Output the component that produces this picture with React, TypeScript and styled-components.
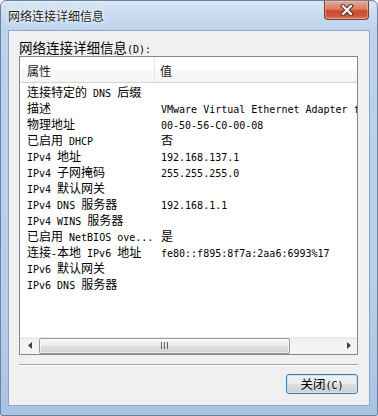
import React from 'react';
import styled, { createGlobalStyle } from 'styled-components';

const CJK = `"Noto Sans CJK SC", "Noto Sans", sans-serif`;
const MONO = `"DejaVu Sans Mono", "Liberation Mono", monospace`;

const GlobalStyle = createGlobalStyle`
  html, body {
    margin: 0;
    padding: 0;
    background: #ffffff;
  }
  body {
    width: 378px;
    height: 416px;
    overflow: hidden;
    font-family: ${CJK};
  }
`;

const Window = styled.div`
  box-sizing: border-box;
  width: 378px;
  height: 416px;
  display: flex;
  flex-direction: column;
  padding: 0 7px 9px 7px;
  border: 1px solid #6f839c;
  border-radius: 6px 6px 2px 2px;
  background: linear-gradient(to bottom, #dbe8f6 0px, #c8dbf0 14px, #bdd3ec 30px, #b6cee9 300px, #a9c4e4 100%);
`;

const TitleBar = styled.div`
  height: 29px;
  margin: 0 -7px;
  padding: 0 8px 0 7px;
  display: flex;
  justify-content: space-between;
  flex-shrink: 0;
`;

const Title = styled.div`
  font-size: 12px;
  line-height: 29px;
  color: #1e1e1e;
  text-shadow: 0 0 6px #ffffff, 0 0 3px #ffffff;
`;

const CloseButton = styled.div`
  width: 45px;
  height: 19px;
  box-sizing: border-box;
  border: 1px solid #7d3a2a;
  border-top: none;
  border-radius: 0 0 4px 4px;
  background: linear-gradient(to bottom, #eaa996 0%, #dd7c62 45%, #c8492b 55%, #cf5a3c 85%, #e08a70 100%);
  box-shadow: inset 0 0 0 1px rgba(255, 200, 180, 0.45);
  display: flex;
  align-items: center;
  justify-content: center;
`;

const Client = styled.div`
  flex: 1;
  display: flex;
  flex-direction: column;
  background: #f0f0f0;
  border: 1px solid #8ea6c4;
  padding: 8px 11px 0 10px;
`;

const GroupLabel = styled.div`
  font-size: 13.5px;
  line-height: 16px;
  height: 16px;
  margin-bottom: 1px;
  color: #000;
  white-space: pre;
`;

const Latin = styled.span`
  font-family: ${MONO};
  font-size: 10px;
`;

const ListBox = styled.div`
  box-sizing: border-box;
  height: 299px;
  border: 1px solid #828790;
  background: #ffffff;
  display: flex;
  flex-direction: column;
`;

const HeaderRow = styled.div`
  box-sizing: border-box;
  height: 26px;
  display: flex;
  background: linear-gradient(to bottom, #ffffff 0%, #ffffff 45%, #f7f8f9 55%, #f3f4f6 100%);
  border-bottom: 1px solid #d5d5d5;
  flex-shrink: 0;
`;

const HeaderCell = styled.div<{ $w?: number }>`
  box-sizing: border-box;
  ${(p) => (p.$w ? `width: ${p.$w}px;` : 'flex: 1;')}
  padding: 4px 0 0 ${(p) => (p.$w ? 7 : 5)}px;
  font-size: 12px;
  line-height: 20px;
  color: #1a1a1a;
  border-right: ${(p) => (p.$w ? '1px solid #e3e5e8' : 'none')};
`;

const Rows = styled.div`
  flex: 1;
  overflow: hidden;
  padding-top: 1px;
`;

const Row = styled.div`
  display: flex;
  height: 16px;
  line-height: 16px;
  font-size: 12px;
  color: #000;
  white-space: pre;
`;

const NameCell = styled.div`
  box-sizing: border-box;
  width: 135px;
  padding-left: 7px;
  overflow: hidden;
`;

const ValueCell = styled.div`
  flex: 1;
  padding-left: 6px;
  overflow: hidden;
`;

const HScroll = styled.div`
  height: 17px;
  display: flex;
  flex-shrink: 0;
  background: linear-gradient(to bottom, #e8e8e8 0px, #f2f2f2 3px, #f4f4f4 100%);
`;

const ArrowBox = styled.div<{ $w: number }>`
  width: ${(p) => p.$w}px;
  display: flex;
  align-items: center;
  justify-content: center;
`;

const Track = styled.div`
  flex: 1;
  display: flex;
  align-items: center;
`;

const Thumb = styled.div`
  box-sizing: border-box;
  width: 251px;
  height: 16px;
  border: 1px solid #9a9a9a;
  border-radius: 2px;
  background: linear-gradient(to bottom, #f5f5f5 0%, #ececec 45%, #dcdcdc 55%, #d2d2d2 100%);
  box-shadow: inset 0 0 0 1px rgba(255, 255, 255, 0.6);
  display: flex;
  align-items: center;
  justify-content: center;
`;

const Separator = styled.div`
  margin-top: 9px;
  height: 1px;
  background: #a0a0a0;
  border-bottom: 1px solid #ffffff;
`;

const Footer = styled.div`
  display: flex;
  justify-content: flex-end;
  padding-top: 8px;
`;

const PushButton = styled.div`
  box-sizing: border-box;
  width: 72px;
  height: 20px;
  border: 1px solid #3c7fb1;
  border-radius: 3px;
  background: linear-gradient(to bottom, #f2f2f2 0%, #ebebeb 48%, #dddddd 52%, #cfcfcf 100%);
  box-shadow: inset 0 0 0 1px #c6e6f8;
  font-size: 12.5px;
  line-height: 18px;
  text-align: center;
  color: #000;
  white-space: pre;
`;

const Mixed = ({ text }: { text: string }) => (
  <>
    {text
      .split(/([\x00-\x7f]+)/)
      .filter(Boolean)
      .map((part, i) =>
        /^[\x00-\x7f]+$/.test(part) ? <Latin key={i}>{part}</Latin> : <React.Fragment key={i}>{part}</React.Fragment>
      )}
  </>
);

const rows: [string, string][] = [
  ['连接特定的 DNS 后缀', ''],
  ['描述', 'VMware Virtual Ethernet Adapter f'],
  ['物理地址', '00-50-56-C0-00-08'],
  ['已启用 DHCP', '否'],
  ['IPv4 地址', '192.168.137.1'],
  ['IPv4 子网掩码', '255.255.255.0'],
  ['IPv4 默认网关', ''],
  ['IPv4 DNS 服务器', '192.168.1.1'],
  ['IPv4 WINS 服务器', ''],
  ['已启用 NetBIOS ove...', '是'],
  ['连接-本地 IPv6 地址', 'fe80::f895:8f7a:2aa6:6993%17'],
  ['IPv6 默认网关', ''],
  ['IPv6 DNS 服务器', ''],
];

const CloseGlyph = () => (
  <svg width="14" height="12" viewBox="0 0 14 12">
    <path d="M3 2 L11 10 M11 2 L3 10" stroke="#5a2a20" strokeWidth="4.2" strokeLinecap="square" />
    <path d="M3 2 L11 10 M11 2 L3 10" stroke="#ffffff" strokeWidth="2.2" strokeLinecap="square" />
  </svg>
);

const Arrow = ({ dir }: { dir: 'left' | 'right' }) => (
  <svg width="4" height="7" viewBox="0 0 4 7">
    {dir === 'left' ? <polygon points="4,0 0,3.5 4,7" fill="#404040" /> : <polygon points="0,0 4,3.5 0,7" fill="#404040" />}
  </svg>
);

const Grip = () => (
  <svg width="7" height="7" viewBox="0 0 7 7">
    <path d="M0.5 0 V7 M3.5 0 V7 M6.5 0 V7" stroke="#5f5f5f" strokeWidth="1" />
  </svg>
);

export default function App() {
  return (
    <>
      <GlobalStyle />
      <Window>
        <TitleBar>
          <Title>网络连接详细信息</Title>
          <CloseButton>
            <CloseGlyph />
          </CloseButton>
        </TitleBar>
        <Client>
          <GroupLabel>
            <Mixed text="网络连接详细信息(D):" />
          </GroupLabel>
          <ListBox>
            <HeaderRow>
              <HeaderCell $w={135}>属性</HeaderCell>
              <HeaderCell>值</HeaderCell>
            </HeaderRow>
            <Rows>
              {rows.map(([name, value]) => (
                <Row key={name}>
                  <NameCell>
                    <Mixed text={name} />
                  </NameCell>
                  <ValueCell>
                    <Mixed text={value} />
                  </ValueCell>
                </Row>
              ))}
            </Rows>
            <HScroll>
              <ArrowBox $w={19}>
                <Arrow dir="left" />
              </ArrowBox>
              <Track>
                <Thumb>
                  <Grip />
                </Thumb>
              </Track>
              <ArrowBox $w={17}>
                <Arrow dir="right" />
              </ArrowBox>
            </HScroll>
          </ListBox>
          <Separator />
          <Footer>
            <PushButton>
              <Mixed text="关闭(C)" />
            </PushButton>
          </Footer>
        </Client>
      </Window>
    </>
  );
}
